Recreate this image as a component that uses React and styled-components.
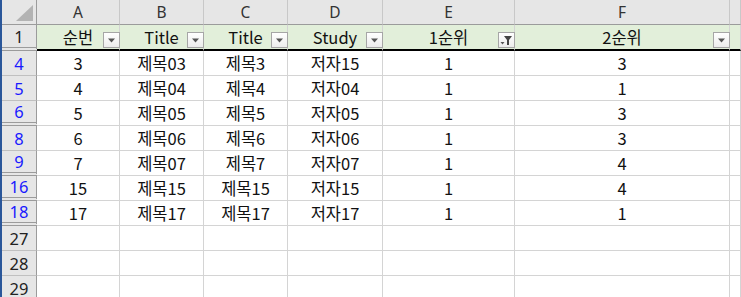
import { Fragment } from "react";
import styled, { createGlobalStyle } from "styled-components";

const GlobalStyle = createGlobalStyle`
  html, body {
    margin: 0;
    padding: 0;
    background: #ffffff;
    overflow: hidden;
  }
  body {
    font-family: "Noto Sans CJK KR", "Noto Sans", sans-serif;
  }
`;

const Sheet = styled.div`
  display: grid;
  grid-template-columns: 35px 83px 84px 84px 95px 132px 215px 1fr;
  width: 741px;
  height: 297px;
  border-left: 2px solid #2b579a;
  box-sizing: border-box;
  overflow: hidden;
  font-size: 16.5px;
  color: #111;
`;

const Corner = styled.div`
  height: 25px;
  box-sizing: border-box;
  background: #e6e6e6;
  border-right: 1px solid #9b9b9b;
  border-bottom: 1px solid #9b9b9b;
  display: flex;
  align-items: flex-start;
  justify-content: flex-end;
  padding: 5px 3px 0 0;
`;

const ColHead = styled.div`
  height: 25px;
  box-sizing: border-box;
  background: #e6e6e6;
  border-right: 1px solid #c8c8c8;
  border-bottom: 1px solid #9b9b9b;
  display: flex;
  align-items: center;
  justify-content: center;
  color: #333;
  font-family: "Noto Sans", sans-serif;
  font-size: 15.5px;
`;

const RowHead = styled.div`
  height: ${(p) => (p.$top ? 26 : 25)}px;
  box-sizing: border-box;
  background: #e6e6e6;
  border-right: 1px solid #9b9b9b;
  border-bottom: ${(p) => (p.$gap ? "4px double #9b9b9b" : "1px solid #c0c0c0")};
  display: flex;
  align-items: center;
  justify-content: center;
  color: ${(p) => (p.$filtered ? "#1a1aff" : "#222")};
  font-family: "Noto Sans", sans-serif;
  font-size: 16.5px;
`;

const Cell = styled.div`
  position: relative;
  height: ${(p) => (p.$head ? 26 : 25)}px;
  box-sizing: border-box;
  background: ${(p) => (p.$head ? "#e2efda" : "#ffffff")};
  border-right: 1px solid #d4d4d4;
  border-bottom: ${(p) => (p.$head ? "2px solid #000" : "1px solid #d4d4d4")};
  display: flex;
  align-items: center;
  justify-content: center;
  white-space: nowrap;
`;

const FilterButton = styled.div`
  position: absolute;
  right: -1px;
  top: 7px;
  width: 17px;
  height: 16px;
  box-sizing: border-box;
  border: 1px solid #a6a6a6;
  background: linear-gradient(#ffffff, #ececec);
  display: flex;
  align-items: center;
  justify-content: center;
  z-index: 1;
`;

const Arrow = () => (
  <svg width="9" height="5" viewBox="0 0 9 5">
    <path d="M1 0.5 H8 L4.5 4.5 Z" fill="#555" />
  </svg>
);

const Funnel = () => (
  <svg width="13" height="11" viewBox="0 0 13 11">
    <path d="M4 1 H12 L9 5 V10 H7 V5 Z" fill="#444" />
    <path d="M0.5 7 H4.5 L2.5 9.5 Z" fill="#555" />
  </svg>
);

const CornerMark = () => (
  <svg width="17" height="16" viewBox="0 0 17 16">
    <path d="M17 0 V16 H0 Z" fill="#b3b3b3" />
  </svg>
);

const letters = ["A", "B", "C", "D", "E", "F", ""];
const titles = ["순번", "Title", "Title", "Study", "1순위", "2순위"];

const rows = [
  { n: 4, v: [3, "제목03", "제목3", "저자15", 1, 3] },
  { n: 5, v: [4, "제목04", "제목4", "저자04", 1, 1] },
  { n: 6, v: [5, "제목05", "제목5", "저자05", 1, 3], gap: true },
  { n: 8, v: [6, "제목06", "제목6", "저자06", 1, 3] },
  { n: 9, v: [7, "제목07", "제목7", "저자07", 1, 4], gap: true },
  { n: 16, v: [15, "제목15", "제목15", "저자15", 1, 4], gap: true },
  { n: 18, v: [17, "제목17", "제목17", "저자17", 1, 1], gap: true },
  { n: 27, v: ["", "", "", "", "", ""], plain: true },
  { n: 28, v: ["", "", "", "", "", ""], plain: true },
  { n: 29, v: ["", "", "", "", "", ""], plain: true },
];

const App = () => {
  return (
    <>
      <GlobalStyle />
      <Sheet>
        <Corner>
          <CornerMark />
        </Corner>
        {letters.map((l, i) => (
          <ColHead key={"c" + i}>{l}</ColHead>
        ))}

        <RowHead $gap $top>1</RowHead>
        {titles.map((t, i) => (
          <Cell key={"h" + i} $head>
            {t}
            <FilterButton>{i === 4 ? <Funnel /> : <Arrow />}</FilterButton>
          </Cell>
        ))}
        <Cell $head />

        {rows.map((r) => (
          <Fragment key={"r" + r.n}>
            <RowHead $gap={r.gap} $filtered={!r.plain}>
              {r.n}
            </RowHead>
            {r.v.map((v, i) => (
              <Cell key={i}>{v}</Cell>
            ))}
            <Cell />
          </Fragment>
        ))}
      </Sheet>
    </>
  );
};

export default App;
